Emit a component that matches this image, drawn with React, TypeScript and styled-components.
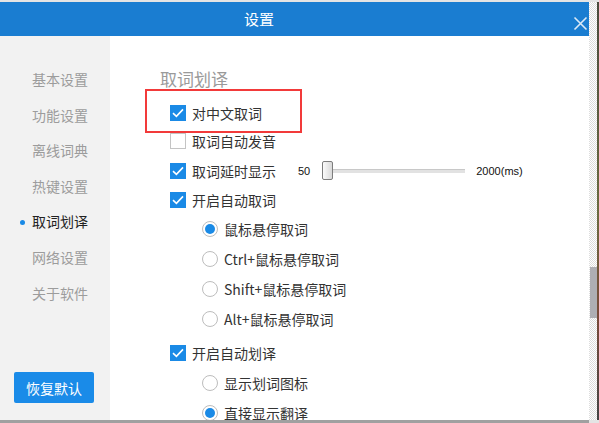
import React from 'react'
import styled, { createGlobalStyle } from 'styled-components'

const GlobalStyle = createGlobalStyle`
  html, body {
    margin: 0;
    padding: 0;
    overflow: hidden;
    background: #e4e4e4;
  }
  body {
    font-family: "Noto Sans CJK SC", "Noto Sans", sans-serif;
  }
`

const Screen = styled.div`
  width: 599px;
  height: 423px;
  padding-top: 2px;
  box-sizing: border-box;
  display: flex;
  background: #e4e4e4;
`

const Dialog = styled.div`
  width: 589px;
  height: 418px;
  display: flex;
  flex-direction: column;
  background: #fff;
  box-shadow: 0 3px 0 #a0a0a0;
`

const TitleBar = styled.div`
  height: 34px;
  flex-shrink: 0;
  background: #1a7dd1;
  display: flex;
  align-items: center;
  position: relative;
`

const Title = styled.div`
  width: 518px;
  text-align: center;
  color: #fff;
  font-size: 15px;
  line-height: 34px;
`

const CloseButton = styled.div`
  position: absolute;
  right: 1px;
  top: 10px;
  width: 15px;
  height: 15px;
`

const Body = styled.div`
  flex: 1;
  display: flex;
  min-height: 0;
`

const Sidebar = styled.div`
  width: 110px;
  flex-shrink: 0;
  background: #f2f2f2;
  display: flex;
  flex-direction: column;
  padding-top: 26px;
  box-sizing: border-box;
`

const NavItem = styled.div<{ $active?: boolean }>`
  height: 35.6px;
  line-height: 35.6px;
  flex-shrink: 0;
  font-size: 14px;
  padding-left: 32px;
  color: ${p => (p.$active ? '#222' : '#9c9c9c')};
  position: relative;
  &::before {
    content: '';
    display: ${p => (p.$active ? 'block' : 'none')};
    position: absolute;
    left: 20px;
    top: 16px;
    width: 5px;
    height: 5px;
    border-radius: 50%;
    background: #1a8ae6;
  }
`

const ResetButton = styled.button`
  margin: auto 0 17px 14px;
  width: 80px;
  height: 31px;
  flex-shrink: 0;
  border: none;
  border-radius: 2px;
  background: #1a8be8;
  color: #fff;
  font-family: inherit;
  font-size: 14px;
  padding: 0;
`

const Content = styled.div`
  flex: 1;
  overflow: hidden;
  padding: 32px 0 0 50px;
  display: flex;
  flex-direction: column;
`

const Heading = styled.div`
  font-size: 17px;
  line-height: 22px;
  color: #9a9a9a;
  margin-bottom: -1px;
  flex-shrink: 0;
`

const Highlight = styled.div`
  width: 157px;
  height: 44px;
  margin: 0 0 -7px -15px;
  flex-shrink: 0;
  border: 2px solid #f23a3a;
  box-sizing: border-box;
  display: flex;
  align-items: center;
  padding: 3px 0 0 23px;
  position: relative;
  z-index: 1;
`

const Row = styled.div<{ $indent?: number; $height?: number; $gap?: number }>`
  display: flex;
  align-items: center;
  height: ${p => p.$height ?? 29}px;
  padding-left: ${p => p.$indent ?? 10}px;
  margin-top: ${p => p.$gap ?? 0}px;
  flex-shrink: 0;
`

const Label = styled.span`
  font-size: 14px;
  color: #333;
  margin-left: 6px;
  white-space: nowrap;
`

const Box = styled.span<{ $checked?: boolean }>`
  width: 16px;
  height: 16px;
  box-sizing: border-box;
  flex-shrink: 0;
  display: flex;
  align-items: center;
  justify-content: center;
  background: ${p => (p.$checked ? '#1a8ae6' : '#fff')};
  border: ${p => (p.$checked ? 'none' : '1px solid #c4c4c4')};
`

const Radio = styled.span<{ $checked?: boolean }>`
  width: 16px;
  height: 16px;
  box-sizing: border-box;
  flex-shrink: 0;
  border-radius: 50%;
  border: 1px solid #bdbdbd;
  background: #fff;
  display: flex;
  align-items: center;
  justify-content: center;
  &::after {
    content: '';
    display: ${p => (p.$checked ? 'block' : 'none')};
    width: 10px;
    height: 10px;
    border-radius: 50%;
    background: #1a8ae6;
  }
`

const Slider = styled.div`
  display: flex;
  align-items: center;
  margin-left: 22px;
  font-family: "Liberation Sans", sans-serif;
  font-size: 11px;
  color: #111;
`

const Track = styled.div`
  width: 143px;
  height: 19px;
  margin: 0 11px 0 12px;
  position: relative;
  display: flex;
  align-items: center;
  &::before {
    content: '';
    width: 100%;
    height: 3px;
    background: #e2e2e2;
    border-top: 1px solid #c8c8c8;
  }
`

const Thumb = styled.div`
  position: absolute;
  left: 0;
  top: 0;
  width: 11px;
  height: 19px;
  box-sizing: border-box;
  border: 1px solid #7d7d7d;
  border-radius: 2px;
  background: linear-gradient(to right, #fbfbfb, #d9d9d9);
`

const ScrollStrip = styled.div`
  width: 10px;
  height: 418px;
  background-color: #fff;
  background-image: repeating-conic-gradient(#dcdcdc 0 25%, #fff 0 50%);
  background-size: 2px 2px;
  position: relative;
  &::after {
    content: '';
    position: absolute;
    right: 0;
    top: 0;
    width: 2px;
    height: 100%;
    background: linear-gradient(#4a4a3c, #6a6a40 50%, #7a4a3a 75%, #444);
  }
`

const Thumbbar = styled.div`
  position: absolute;
  left: 1px;
  top: 265px;
  width: 8px;
  height: 51px;
  background: #aeaeb3;
`

const Check = () => (
  <svg width="12" height="10" viewBox="0 0 12 10">
    <path d="M1 5.2 L4.4 8.4 L11 1.4" fill="none" stroke="#fff" strokeWidth="1.6" />
  </svg>
)

function CheckItem({ checked, label }: { checked?: boolean; label: string }) {
  return (
    <>
      <Box $checked={checked}>{checked && <Check />}</Box>
      <Label>{label}</Label>
    </>
  )
}

const navItems = ['基本设置', '功能设置', '离线词典', '热键设置', '取词划译', '网络设置', '关于软件']

export default function App() {
  return (
    <>
      <GlobalStyle />
      <Screen>
        <Dialog>
          <TitleBar>
            <Title>设置</Title>
            <CloseButton>
              <svg width="15" height="15" viewBox="0 0 15 15">
                <path d="M1.5 1.5 L13.5 13.5 M13.5 1.5 L1.5 13.5" stroke="#dbe9f7" strokeWidth="1.6" />
              </svg>
            </CloseButton>
          </TitleBar>
          <Body>
            <Sidebar>
              {navItems.map(n => (
                <NavItem key={n} $active={n === '取词划译'}>{n}</NavItem>
              ))}
              <ResetButton>恢复默认</ResetButton>
            </Sidebar>
            <Content>
              <Heading>取词划译</Heading>
              <Highlight>
                <CheckItem checked label="对中文取词" />
              </Highlight>
              <Row $height={30}>
                <CheckItem label="取词自动发音" />
              </Row>
              <Row>
                <CheckItem checked label="取词延时显示" />
                <Slider>
                  <span>50</span>
                  <Track>
                    <Thumb />
                  </Track>
                  <span>2000(ms)</span>
                </Slider>
              </Row>
              <Row>
                <CheckItem checked label="开启自动取词" />
              </Row>
              <Row $indent={42} $height={30}>
                <Radio $checked />
                <Label>鼠标悬停取词</Label>
              </Row>
              <Row $indent={42} $height={30}>
                <Radio />
                <Label>Ctrl+鼠标悬停取词</Label>
              </Row>
              <Row $indent={42} $height={30}>
                <Radio />
                <Label>Shift+鼠标悬停取词</Label>
              </Row>
              <Row $indent={42} $height={30}>
                <Radio />
                <Label>Alt+鼠标悬停取词</Label>
              </Row>
              <Row $gap={4}>
                <CheckItem checked label="开启自动划译" />
              </Row>
              <Row $indent={42} $height={31}>
                <Radio />
                <Label>显示划词图标</Label>
              </Row>
              <Row $indent={42} $height={30}>
                <Radio $checked />
                <Label>直接显示翻译</Label>
              </Row>
            </Content>
          </Body>
        </Dialog>
        <ScrollStrip>
          <Thumbbar />
        </ScrollStrip>
      </Screen>
    </>
  )
}
